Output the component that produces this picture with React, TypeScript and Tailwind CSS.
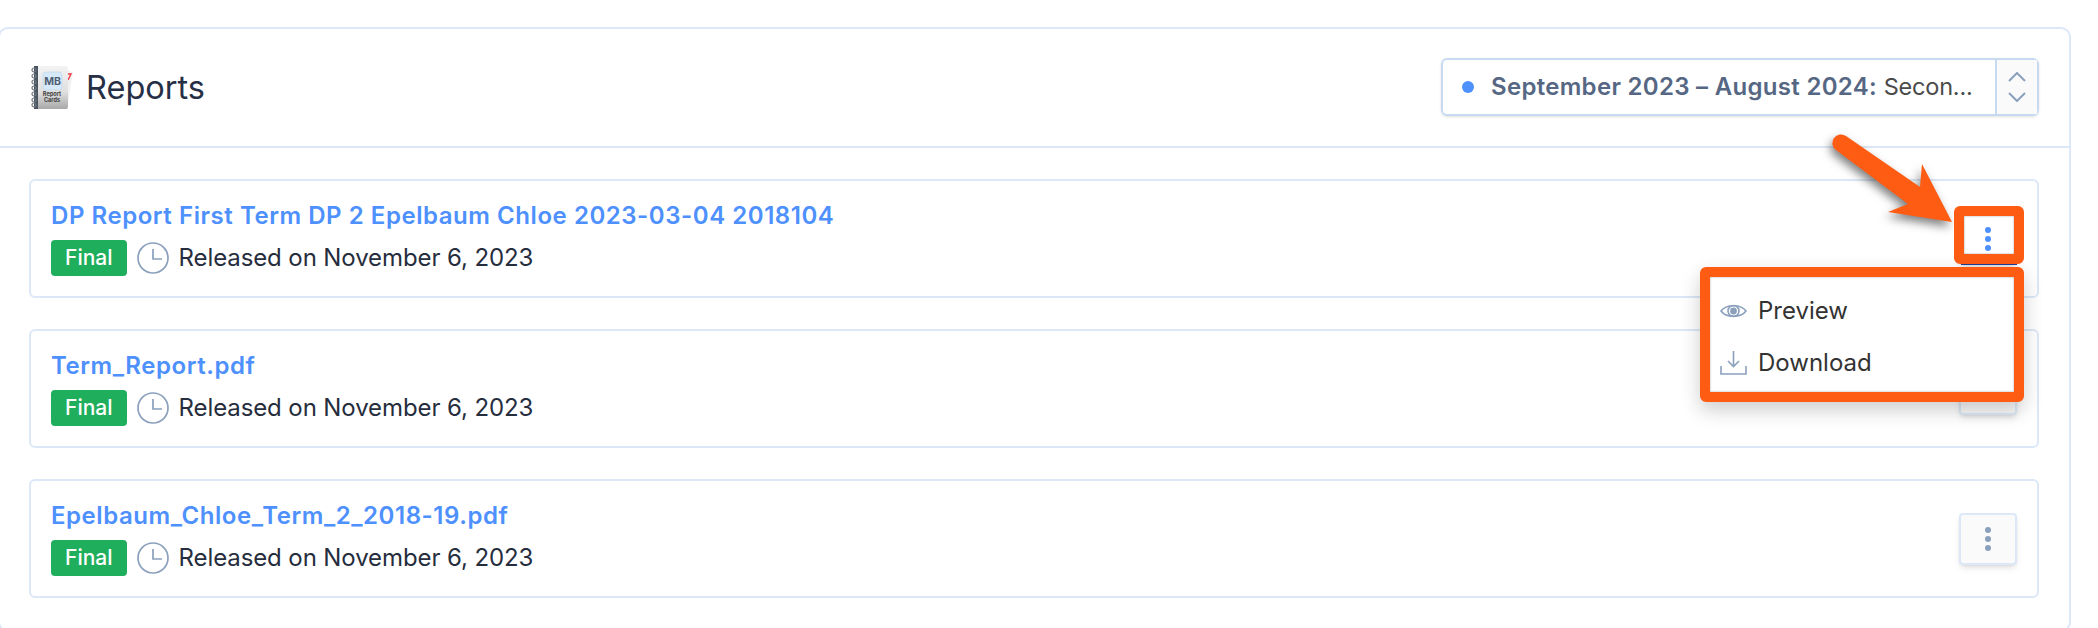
const reports = ['DP Report First Term DP 2 Epelbaum Chloe 2023-03-04 2018104', 'Term_Report.pdf', 'Epelbaum_Chloe_Term_2_2018-19.pdf'];

const ReportCardsIcon = () => (
  <svg className="shrink-0" width="44" height="44" viewBox="0 0 44 44">
    <defs>
      <linearGradient id="cover" x1="0" y1="0" x2="0" y2="1">
        <stop offset="0" stopColor="#f3f3f3" />
        <stop offset="0.6" stopColor="#e0e0e0" />
        <stop offset="1" stopColor="#a8a8a8" />
      </linearGradient>
    </defs>
    <path d="M30 3l12 3-6 36-26 1z" fill="#f1f1f1" />
    <path d="M36 8h4l-3 6" fill="none" stroke="#ee3b42" strokeWidth="1.4" />
    <rect x="3" y="0" width="34" height="43" rx="2" fill="url(#cover)" />
    <rect x="3" y="0" width="4" height="43" fill="#4a5361" />
    {[4, 10, 16, 22, 28, 34, 39].map((y) => (
      <circle key={y} cx="3" cy={y} r="2" fill="none" stroke="#70777f" strokeWidth="1.2" />
    ))}
    <rect x="12" y="6" width="19" height="18" rx="3" fill="#d6e9fb" stroke="#bcd4ea" strokeWidth="0.6" />
    <text x="21.5" y="19" textAnchor="middle" fontSize="10.5" fontWeight="700" fill="#4f5f72">MB</text>
    <text x="21" y="30" textAnchor="middle" fontSize="5.6" fontWeight="700" fill="#3f3f3f">Report</text>
    <text x="21" y="36" textAnchor="middle" fontSize="5.6" fontWeight="700" fill="#3f3f3f">Cards</text>
  </svg>
);

const ClockIcon = () => (
  <svg className="shrink-0" width="32" height="34" viewBox="0 0 32 34" fill="none" stroke="#8ba0bd" strokeWidth="1.7">
    <circle cx="16" cy="17" r="15" />
    <path d="M16 8v10h9" />
  </svg>
);

const DotsIcon = ({ color }: { color: string }) => (
  <svg width="6" height="24" viewBox="0 0 6 24" fill={color}>
    <circle cx="3" cy="3" r="3" />
    <circle cx="3" cy="12" r="3" />
    <circle cx="3" cy="21" r="3" />
  </svg>
);

const ReportRow = ({ title, active }: { title: string; active?: boolean }) => (
  <div className="flex h-[119px] items-center justify-between rounded-[6px] border-2 border-[#dce8f7] px-[20px]">
    <div>
      <a className="block text-[24px] leading-[30px] font-semibold tracking-[0.55px] text-[#4d90fe]">{title}</a>
      <div className="mt-[9px] flex items-center gap-[10px]">
        <span className="rounded-[4px] bg-[#1fae5c] px-[14px] py-[2px] text-[21px] leading-[32px] font-medium text-white">Final</span>
        <ClockIcon />
        <span className="text-[24px] tracking-[-0.1px] text-[#262d3d]">Released on November 6, 2023</span>
      </div>
    </div>
    <button className={`flex h-[52px] w-[58px] items-center justify-center rounded-[4px] border-2 border-[#dce8f7] shadow-md ${active ? 'bg-white' : 'bg-[#fafafa]'}`}>
      <DotsIcon color={active ? '#4d90fe' : '#8ba0bd'} />
    </button>
  </div>
);

export default function App() {
  return (
    <div className="relative h-[628px] w-[2098px] overflow-hidden bg-white font-['Inter',sans-serif]">
      <div className="mt-[27px] mr-[27px] -ml-[2px] rounded-[10px] border-2 border-[#dce8f7] pb-[32px]">
        {/* Header */}
        <div className="flex h-[119px] items-center justify-between border-b-2 border-[#dce8f7] pr-[30px] pl-[31px]">
          <div className="flex items-center gap-[11px]">
            <ReportCardsIcon />
            <h1 className="mt-[2px] text-[32.5px] text-[#262f45]">Reports</h1>
          </div>
          <div className="-mt-[2px] flex h-[58px] w-[598px] items-stretch rounded-[6px] border-2 border-[#c6daf2] shadow-sm">
            <div className="flex flex-1 items-center gap-[17px] truncate pl-[19px] text-[24px]">
              <span className="h-[12px] w-[12px] shrink-0 rounded-full bg-[#4d90fe]" />
              <span className="truncate">
                <span className="font-semibold tracking-[0.3px] text-[#566784]">September 2023 – August 2024:</span> <span className="text-[23.5px] tracking-[-0.2px] text-[#4a4a4a]">Secon...</span>
              </span>
            </div>
            <div className="flex w-[42px] items-center justify-center border-l-2 border-[#c6daf2] bg-[#fafafa]">
              <svg width="18" height="30" viewBox="0 0 18 30" fill="none" stroke="#8ba0bd" strokeWidth="2">
                <path d="M1 9l8-8 8 8M1 21l8 8 8-8" />
              </svg>
            </div>
          </div>
        </div>

        {/* Report list */}
        <div className="flex flex-col gap-[31px] pt-[31px] pr-[30px] pl-[29px]">
          {reports.map((title, i) => (
            <ReportRow key={title} title={title} active={i === 0} />
          ))}
        </div>
      </div>

      {/* Annotation: arrow */}
      <svg className="absolute top-[125px] left-[1820px] drop-shadow-[-2px_5px_5px_rgba(0,0,0,0.5)]" width="140" height="105" viewBox="0 0 140 105" fill="#ff5c13">
        <path d="M26 11L100 62L102 39L132 97L68 87L88 79L16 25A8.5 8.5 0 0 1 26 11Z" />
      </svg>

      {/* Annotation: highlighted button */}
      <div className="absolute top-[263px] left-[1961px] h-[2px] w-[56px] bg-[#1c3f94]" />
      <div className="absolute top-[206px] left-[1954px] h-[58px] w-[70px] rounded-[6px] border-[10px] border-[#ff5c13] shadow-[inset_0_0_2px_rgba(0,0,0,0.4)]" />

      {/* Dropdown menu */}
      <div className="absolute top-[267px] left-[1700px] h-[135px] w-[324px] rounded-[6px] border-[10px] border-[#ff5c13] bg-white py-[8px] pl-[10px] text-[24px] text-[#333] shadow-[0_8px_20px_rgba(0,0,0,0.2),inset_0_0_2px_rgba(0,0,0,0.4)]">
        <div className="flex h-[52px] items-center gap-[11px]">
          <svg width="27" height="18" viewBox="0 0 27 18" fill="none" stroke="#8ba0bd" strokeWidth="1.6">
            <path d="M1 9C6 2 21 2 26 9C21 16 6 16 1 9Z" />
            <circle cx="13.5" cy="9" r="5.5" />
            <circle cx="13.5" cy="9" r="2.6" fill="#8ba0bd" />
          </svg>
          <span>Preview</span>
        </div>
        <div className="flex h-[52px] items-center gap-[11px]">
          <svg width="27" height="24" viewBox="0 0 27 24" fill="none" stroke="#8ba0bd" strokeWidth="1.6">
            <path d="M1 15v8h25v-8M13.500 0v15M8 10l5.500 5.500 5.500-5.500" />
          </svg>
          <span>Download</span>
        </div>
      </div>
    </div>
  );
}
